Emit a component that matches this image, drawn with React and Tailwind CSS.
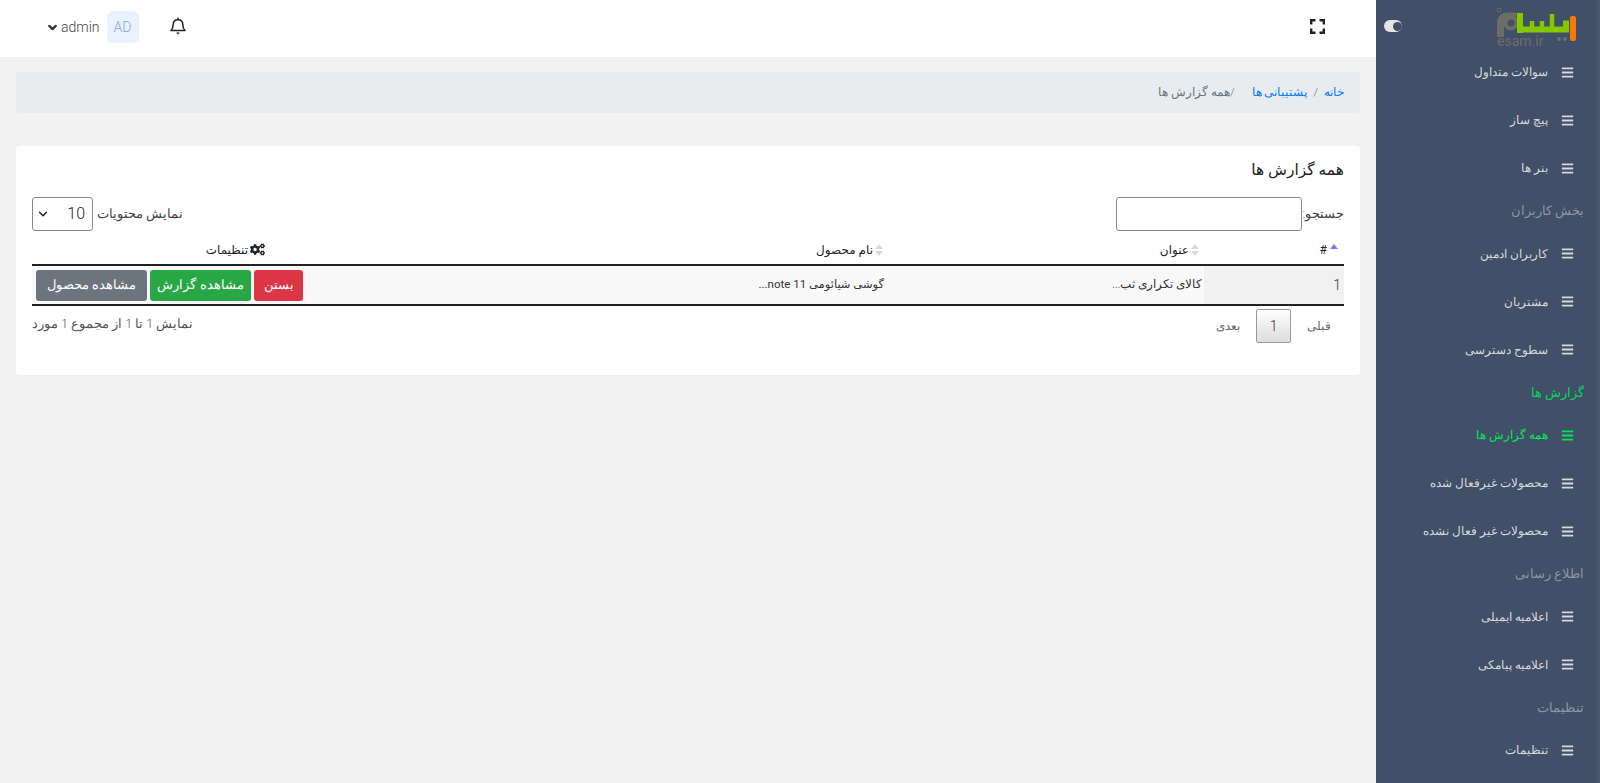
import { ChevronDown } from "lucide-react";
import { FaBars, FaCogs } from "react-icons/fa";

const font = "[font-family:Roboto,'Noto_Sans','DejaVu_Sans',sans-serif]";

const menu = [
  { label: "سوالات متداول" },
  { label: "پیچ ساز" },
  { label: "بنر ها" },
  { section: "بخش کاربران" },
  { label: "کاربران ادمین" },
  { label: "مشتریان" },
  { label: "سطوح دسترسی" },
  { section: "گزارش ها", active: true },
  { label: "همه گزارش ها", active: true },
  { label: "محصولات غیرفعال شده" },
  { label: "محصولات غیر فعال نشده" },
  { section: "اطلاع رسانی" },
  { label: "اعلامیه ایمیلی" },
  { label: "اعلامیه پیامکی" },
  { section: "تنظیمات" },
  { label: "تنظیمات" },
];

function SortArrows({ up }) {
  return (
    <svg width="10" height="14" viewBox="0 0 10 14" className="shrink-0">
      <path d="M5 1 9 6H1z" fill={up ? "#7b7fd8" : "#d9d9d9"} />
      {!up && <path d="M5 13 1 8h8z" fill="#d9d9d9" />}
    </svg>
  );
}

function Logo() {
  return (
    <svg width="90" height="45" viewBox="0 0 90 45" direction="ltr">
      <path d="M10.5 32V19q0-8 8-8h8" fill="none" stroke="#6d6d68" strokeWidth="7" />
      <circle cx="21" cy="18" r="5.5" fill="#414f68" stroke="#6d6d68" strokeWidth="4" />
      <circle cx="9" cy="5" r="2" fill="none" stroke="#6d6d68" strokeWidth="1" />
      <text x="7" y="41" fontSize="14" fill="#6d6d68" fontFamily="Roboto" textAnchor="start" direction="ltr">esam.ir</text>
      <path d="M30 8v20" stroke="#84c800" strokeWidth="6" />
      <path d="M27 24.5h49v-9" fill="none" stroke="#84c800" strokeWidth="6" />
      <path d="M42 24v-8M52 24v-8M62 24V9" stroke="#84c800" strokeWidth="4.5" />
      <rect x="80" y="11" width="6" height="25" rx="2" fill="#f47b00" />
      <circle cx="69" cy="34" r="2" fill="#6d6d68" />
      <circle cx="75" cy="34" r="2" fill="#6d6d68" />
    </svg>
  );
}

function ExpandIcon() {
  return (
    <svg width="15" height="15" viewBox="0 0 15 15" fill="none" stroke="#222" strokeWidth="2.4">
      <path d="M1.2 5.5V1.2h4.3M9.5 1.2h4.3v4.3M13.8 9.5v4.3H9.5M5.5 13.8H1.2V9.5" />
    </svg>
  );
}

function BellIcon() {
  return (
    <svg width="16" height="18" viewBox="0 0 16 18" fill="none" stroke="#222" strokeWidth="1.5">
      <path d="M1 13.5c1.6-1.5 2.2-3 2.2-6 0-3 2-4.8 4.8-4.8s4.8 1.8 4.8 4.8c0 3 .6 4.5 2.2 6z" strokeLinejoin="round" />
      <path d="M8 .6v2" />
      <path d="M6.2 15.6h3.6L8 17.4z" fill="#222" stroke="none" />
    </svg>
  );
}

function Sidebar() {
  return (
    <aside className="w-[224px] shrink-0 h-[783px] overflow-hidden bg-[#414f68] border-r-[3px] border-r-[#4a5870]">
      <div className="h-[48px] flex items-start justify-between pr-[17px] pl-[8px] pt-[5px]">
        <Logo />
        <div className="mt-[15px] w-[18px] h-[12px] rounded-full bg-[#e4e4e4] flex items-center justify-start pl-[1px]">
          <span className="ml-[7px] w-[9px] h-[9px] rounded-full bg-[#414f68]" />
        </div>
      </div>
      <nav className="flex flex-col">
        {menu.map((m, i) =>
          m.section ? (
            <div
              key={i}
              className={`h-[37.5px] flex items-center pr-[13px] text-[13px] font-light ${m.active ? "text-[#00d957]" : "text-[#8d95a3]"}`}
            >
              {m.section}
            </div>
          ) : (
            <div
              key={i}
              className={`h-[48px] flex items-center gap-[13px] pr-[23px] text-[12px] font-light ${m.active ? "text-[#00e65c]" : "text-[#d8d8d8]"}`}
            >
              <FaBars size={13} className="shrink-0" />
              <span>{m.label}</span>
            </div>
          )
        )}
      </nav>
    </aside>
  );
}

function Header() {
  return (
    <header className="h-[57px] bg-white flex items-center justify-between pr-[51px] pl-[46px]">
      <span className="mb-[4px]"><ExpandIcon /></span>
      <div className="flex items-center mb-[3px]" dir="ltr">
        <ChevronDown size={13} strokeWidth={4} className="text-[#333]" />
        <span className="ml-[2px] text-[14px] font-light text-[#444]">admin</span>
        <span className="ml-[7px] w-[32px] h-[32px] rounded-[6px] bg-[#eaf2ff] text-[#86a5f5] text-[14px] font-light flex items-center justify-center">AD</span>
        <span className="ml-[31px] mb-[2px]"><BellIcon /></span>
      </div>
    </header>
  );
}

function Content() {
  return (
    <main className="px-[16px] pt-[15px]">
      <div className="h-[41px] rounded-[4px] bg-[#e9ecef] flex items-center pr-[16px] text-[11.5px] font-light">
        <span className="text-[#007bff]">خانه</span>
        <span className="mx-[6px] text-[#6c757d]">/</span>
        <span className="text-[#007bff]">پشتیبانی ها</span>
        <span className="mr-[17px] text-[#6c757d]">/همه گزارش ها</span>
      </div>

      <section className="mt-[33px] h-[229px] bg-white rounded-[4px] px-[16px] pt-[12px]">
        <h2 className="text-[15.5px] leading-[24px] text-[#212529]">همه گزارش ها</h2>

        <div className="mt-[15px] flex items-center justify-between text-[12.5px] font-light text-[#444]">
          <label className="flex items-center">
            <span>جستجو:</span>
            <input className="w-[186px] h-[34px] border border-[#8a8a8a] rounded-[3px] bg-white" />
          </label>
          <label className="flex items-center gap-[4px]">
            <span>نمایش محتویات</span>
            <span className="w-[61px] h-[34px] border border-[#8a8a8a] rounded-[3px] bg-white flex items-center justify-between pr-[7px] pl-[3px] text-[16px] text-[#222]">
              <span>10</span>
              <ChevronDown size={14} strokeWidth={2.5} />
            </span>
          </label>
        </div>

        <table className="w-full mt-[4px] border-collapse text-[12px] text-[#212529]">
          <thead>
            <tr className="h-[30px] border-b-2 border-b-[#222]">
              <th className="w-[140px] font-normal text-right pr-[5px]">
                <span className="flex items-center gap-[2px]"><SortArrows up />#</span>
              </th>
              <th className="w-[312px] font-normal text-right pr-[4px]">
                <span className="flex items-center gap-[1px]"><SortArrows />عنوان</span>
              </th>
              <th className="w-[570px] font-normal text-right pr-[4px]">
                <span className="flex items-center gap-[1px] pr-[4px]"><SortArrows />نام محصول</span>
              </th>
              <th className="font-normal text-right pr-[57px]">
                <span className="flex items-center gap-[2px]"><FaCogs size={15} />تنظیمات</span>
              </th>
            </tr>
          </thead>
          <tbody>
            <tr className="h-[40px] border-b-2 border-b-[#222] bg-[#f9f9f9]">
              <td className="bg-[#f1f1f1] pr-[3px] text-[14px] font-light text-[#333]">1</td>
              <td className="pr-[2px] text-[#333] font-light text-[11.5px]">کالای تکراری ثب...</td>
              <td className="pr-[8px] text-[#333] text-[11.5px]">گوشی شیائومی note 11...</td>
              <td>
                <div className="flex justify-end gap-[3px] pl-[4px] text-[12.5px] font-light text-white">
                  <span className="h-[31px] w-[49px] rounded-[3px] bg-[#dc3545] flex items-center justify-center">بستن</span>
                  <span className="h-[31px] w-[101px] rounded-[3px] bg-[#28a745] flex items-center justify-center">مشاهده گزارش</span>
                  <span className="h-[31px] w-[111px] rounded-[3px] bg-[#6c757d] flex items-center justify-center">مشاهده محصول</span>
                </div>
              </td>
            </tr>
          </tbody>
        </table>

        <div className="mt-[3px] flex items-start justify-between text-[12px] font-light text-[#555]">
          <div className="flex items-center text-[#666]">
            <span className="mr-[13px]">قبلی</span>
            <span className="mr-[16px] w-[35px] h-[34px] rounded-[2px] border border-[#999] bg-gradient-to-b from-white to-[#dcdcdc] flex items-center justify-center text-[#333] text-[14px]">1</span>
            <span className="mr-[16px]">بعدی</span>
          </div>
          <span className="mt-[6px] text-[12.5px]">نمایش 1 تا 1 از مجموع 1 مورد</span>
        </div>
      </section>
    </main>
  );
}

export default function App() {
  return (
    <div dir="rtl" className={`flex h-[783px] overflow-hidden bg-[#f2f2f2] ${font}`}>
      <Sidebar />
      <div className="flex-1 min-w-0">
        <Header />
        <Content />
      </div>
    </div>
  );
}
